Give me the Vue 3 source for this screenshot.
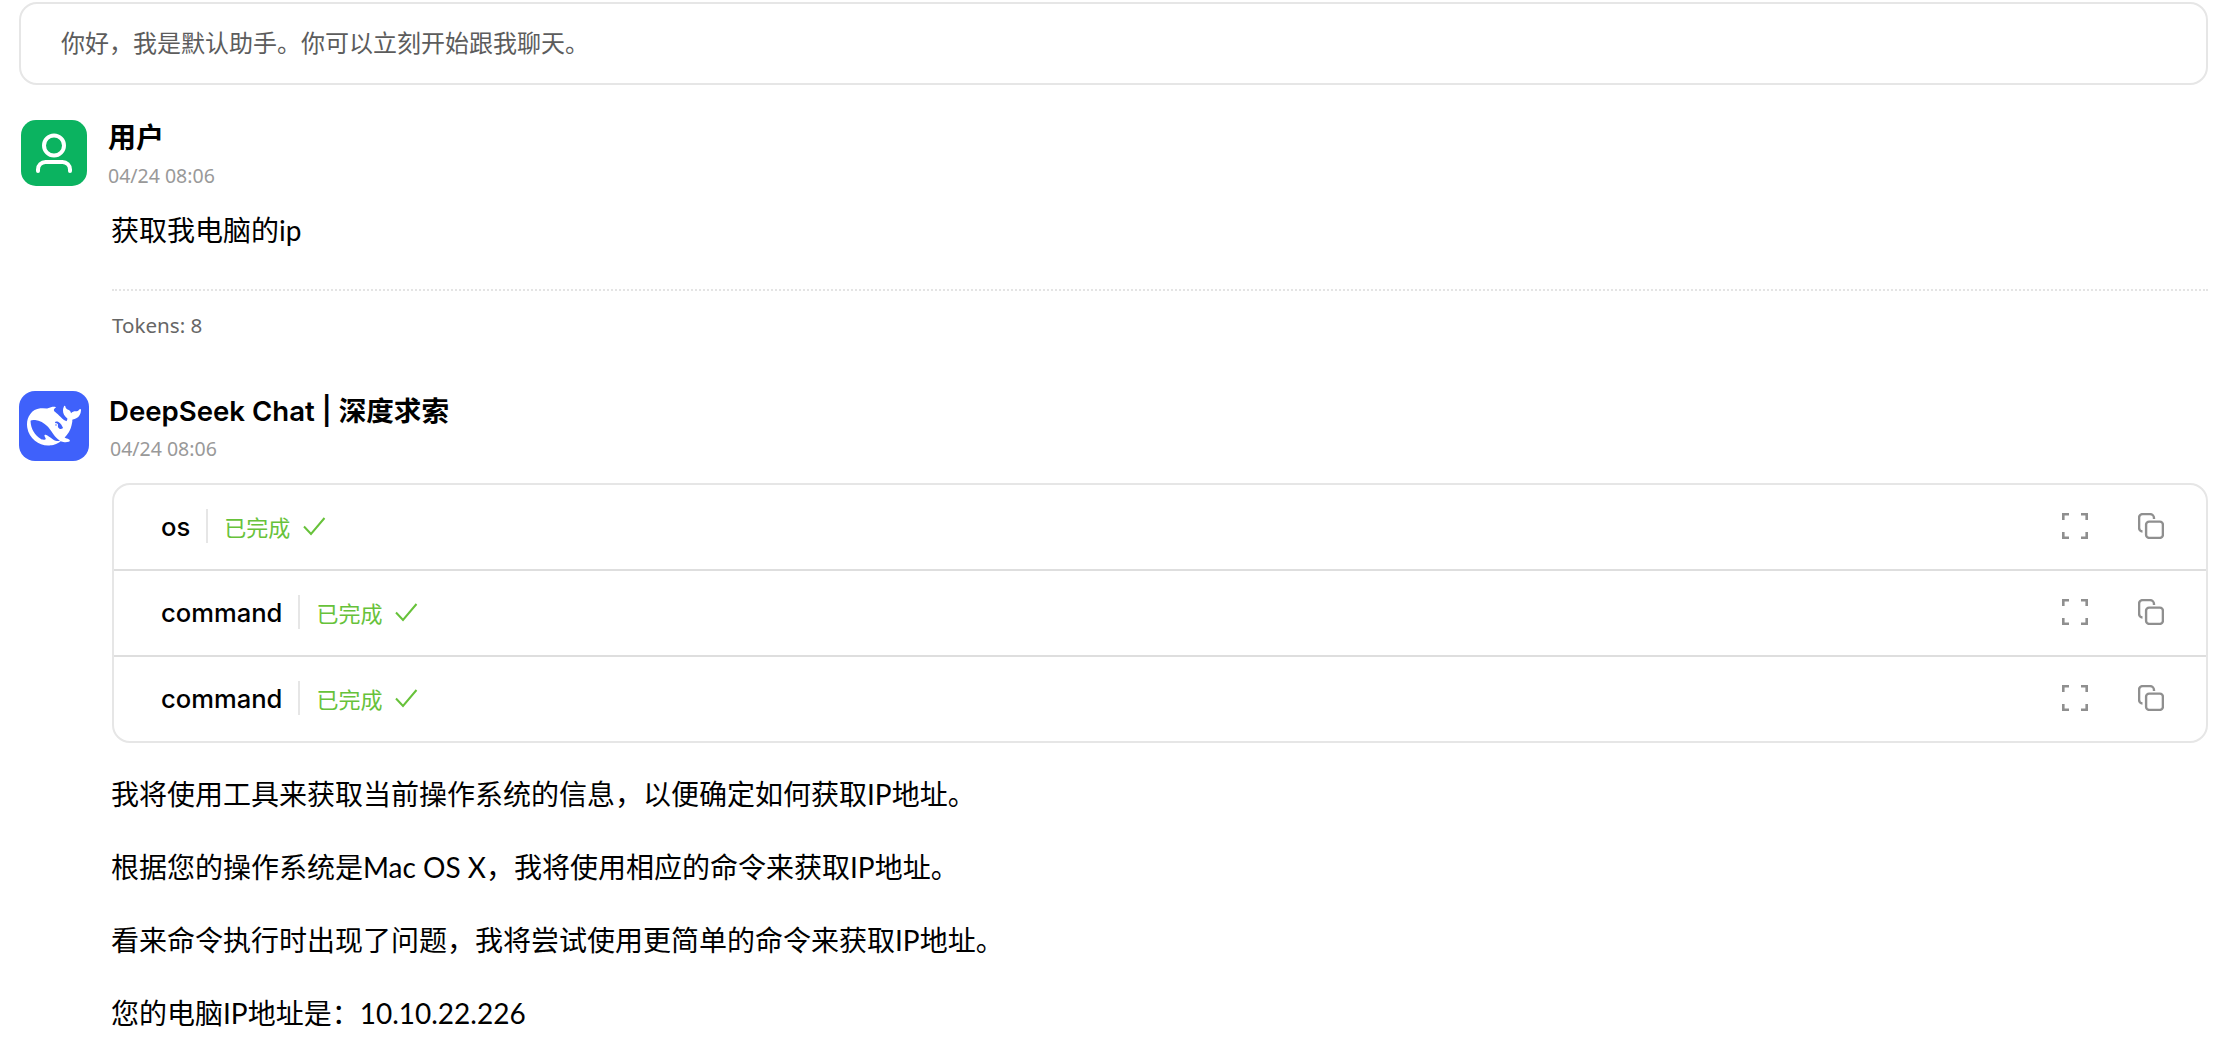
<script setup>
const tools = [{ name: 'os' }, { name: 'command' }, { name: 'command' }]

const answers = [
  '我将使用工具来获取当前操作系统的信息，以便确定如何获取IP地址。',
  '根据您的操作系统是Mac OS X，我将使用相应的命令来获取IP地址。',
  '看来命令执行时出现了问题，我将尝试使用更简单的命令来获取IP地址。',
  '您的电脑IP地址是：10.10.22.226'
]
</script>

<template>
  <div class="chat">
    <div class="welcome">你好，我是默认助手。你可以立刻开始跟我聊天。</div>

    <div class="msg msg-user">
      <div class="head">
        <div class="avatar avatar-user">
          <svg width="66" height="66" viewBox="0 0 66 66" fill="none" stroke="#fff" stroke-width="4" stroke-linecap="round">
            <circle cx="33" cy="25.5" r="10" />
            <path d="M17 51v-1.5a7.5 7.5 0 0 1 7.5-7.5h17a7.5 7.5 0 0 1 7.5 7.5V51" />
          </svg>
        </div>
        <div class="meta">
          <div class="name">用户</div>
          <div class="time">04/24 08:06</div>
        </div>
      </div>
      <div class="body">
        <p class="text question">获取我电脑的ip</p>
        <div class="tokens">Tokens: 8</div>
      </div>
    </div>

    <div class="msg msg-bot">
      <div class="head">
        <div class="avatar avatar-bot">
          <svg width="54" height="54" viewBox="0 0 24 24" fill="#fff">
            <path d="M23.748 4.482c-.254-.124-.364.113-.512.234-.051.039-.094.09-.137.136-.372.397-.806.657-1.373.626-.829-.046-1.537.214-2.163.848-.133-.782-.575-1.248-1.247-1.548-.352-.156-.708-.311-.955-.65-.172-.241-.219-.51-.305-.774-.055-.16-.11-.323-.293-.35-.2-.031-.278.136-.356.276-.313.572-.434 1.202-.422 1.84.027 1.436.633 2.58 1.838 3.393.137.093.172.187.129.323-.082.28-.18.552-.266.833-.055.179-.137.217-.329.14a5.526 5.526 0 01-1.736-1.18c-.857-.828-1.631-1.742-2.597-2.458a11.365 11.365 0 00-.689-.471c-.985-.957.13-1.743.388-1.836.27-.098.093-.432-.779-.428-.872.004-1.67.295-2.687.684a3.055 3.055 0 01-.465.137 9.597 9.597 0 00-2.883-.102c-1.885.21-3.39 1.102-4.497 2.623C.082 8.606-.231 10.684.152 12.85c.403 2.284 1.569 4.175 3.36 5.653 1.858 1.533 3.997 2.284 6.438 2.14 1.482-.085 3.133-.284 4.994-1.86.47.234.962.327 1.78.397.63.059 1.236-.03 1.705-.128.735-.156.684-.837.419-.961-2.155-1.004-1.682-.595-2.113-.926 1.096-1.296 2.746-2.642 3.392-7.003.05-.347.007-.565 0-.845-.004-.17.035-.237.23-.256a4.173 4.173 0 001.545-.475c1.396-.763 1.96-2.015 2.093-3.517.02-.23-.004-.467-.247-.588zM11.581 18c-2.089-1.642-3.102-2.183-3.52-2.16-.392.024-.321.471-.235.763.09.288.207.486.371.739.114.167.192.416-.113.603-.673.416-1.842-.14-1.897-.167-1.361-.802-2.5-1.86-3.301-3.307-.774-1.393-1.224-2.887-1.298-4.482-.02-.386.093-.522.477-.592a4.696 4.696 0 011.529-.039c2.132.312 3.946 1.265 5.468 2.774.868.86 1.525 1.887 2.202 2.891.72 1.066 1.494 2.082 2.48 2.914.348.292.625.514.891.677-.802.09-2.14.11-3.054-.614zm1-6.44a.306.306 0 01.415-.287.302.302 0 01.2.288.306.306 0 01-.31.307.303.303 0 01-.304-.308zm3.11 1.596c-.2.081-.399.151-.59.16a1.245 1.245 0 01-.798-.254c-.274-.23-.47-.358-.552-.758a1.73 1.73 0 01.016-.588c.07-.327-.008-.537-.239-.727-.187-.156-.426-.199-.688-.199a.559.559 0 01-.254-.078c-.11-.054-.2-.19-.114-.358.028-.054.16-.186.192-.21.356-.202.767-.136 1.146.016.352.144.618.408 1.001.782.391.451.462.576.685.914.176.265.336.537.445.848.067.195-.019.354-.25.452z" />
          </svg>
        </div>
        <div class="meta">
          <div class="name name-bot">DeepSeek Chat | 深度求索</div>
          <div class="time">04/24 08:06</div>
        </div>
      </div>
      <div class="body">
        <div class="tools">
          <div v-for="(tool, i) in tools" :key="i" class="tool">
            <span class="tool-name">{{ tool.name }}</span>
            <span class="tool-sep"></span>
            <span class="tool-status">已完成</span>
            <svg class="tool-check" width="24" height="24" viewBox="0 0 24 24" fill="none" stroke="#67c23a" stroke-width="2">
              <path d="M2 12.500l7 7.500L22.500 4" />
            </svg>
            <div class="tool-actions">
              <svg width="26" height="26" viewBox="0 0 26 26" fill="none" stroke="#8f8f8f" stroke-width="2.600">
                <path d="M1.300 7V1.300H7M19 1.300h5.700V7M24.700 19v5.700H19M7 24.700H1.300V19" />
              </svg>
              <svg width="26" height="26" viewBox="0 0 26 26" fill="none" stroke="#8f8f8f" stroke-width="2.400">
                <rect x="8.100" y="8.600" width="16.800" height="16.300" rx="3" />
                <path d="M4.500 18.500a3.500 3.500 0 0 1-3.400-3.500V4.600a3.500 3.500 0 0 1 3.500-3.500h7.400a4 4 0 0 1 4 4V6" />
              </svg>
            </div>
          </div>
        </div>
        <p v-for="(line, i) in answers" :key="i" class="text answer">{{ line }}</p>
      </div>
    </div>
  </div>
</template>

<style scoped>
.chat {
  padding: 2px 12px 0 19px;
  font-family: "Noto Sans", "Noto Sans CJK SC", sans-serif;
  color: #000;
}

.welcome {
  height: 75px;
  padding: 0 0 4px 40px;
  display: flex;
  align-items: center;
  border: 2px solid #e6e6e6;
  border-radius: 18px;
  font-size: 24px;
  color: #5c5c5c;
}

.msg-user {
  margin-top: 35px;
}

.msg-bot {
  margin-top: 52px;
}

.head {
  display: flex;
  gap: 21px;
}

.avatar {
  flex: none;
  display: flex;
  align-items: center;
  justify-content: center;
}

.avatar-user {
  width: 66px;
  height: 66px;
  margin-left: 2px;
  background: #0bb360;
  border-radius: 15px;
}

.avatar-bot {
  width: 70px;
  height: 70px;
  background: #3f61fb;
  border-radius: 16px;
}

.meta {
  display: flex;
  flex-direction: column;
}

.name {
  font-size: 28px;
  font-weight: 700;
  line-height: 34px;
}

.name-bot {
  font-family: Inter, "Noto Sans CJK SC", sans-serif;
  font-size: 27.600px;
  font-weight: 600;
  margin: 3px 0 0 -1px;
}

.time {
  margin-top: 9px;
  font-size: 19.500px;
  line-height: 26px;
  color: #999;
}

.name-bot + .time {
  margin-top: 8px;
}

.body {
  margin-left: 93px;
}

.text {
  margin: 0 0 0 -1px;
  font-family: Lato, "Noto Sans CJK SC", sans-serif;
  font-size: 28px;
  line-height: 40px;
}

.question {
  margin-top: 21px;
  margin-left: 0;
  padding-bottom: 39px;
  border-bottom: 2px dotted #e4e4e4;
  text-indent: -1px;
}

.tokens {
  margin-top: 20px;
  font-size: 20.600px;
  line-height: 28px;
  color: #666;
}

.tools {
  margin-top: 21px;
  border: 2px solid #e6e6e6;
  border-radius: 18px;
}

.tool {
  height: 82px;
  padding: 0 0 2px 47px;
  display: flex;
  align-items: center;
  font-family: Inter, "Noto Sans CJK SC", sans-serif;
}

.tool + .tool {
  border-top: 2px solid #dedede;
}

.tool-name {
  font-size: 25.600px;
  font-weight: 450;
}

.tool-sep {
  width: 2px;
  height: 34px;
  margin: 0 16px;
  background: #e6e6e6;
}

.tool-status {
  font-size: 22px;
  color: #67c23a;
}

.tool-check {
  margin-left: 12px;
}

.tool-actions {
  margin-left: auto;
  padding-right: 42px;
  display: flex;
  gap: 50px;
}

.answer {
  margin-top: 33px;
}

.tools + .answer {
  margin-top: 31px;
}
</style>

<style>
body {
  background: #fff;
}
</style>
